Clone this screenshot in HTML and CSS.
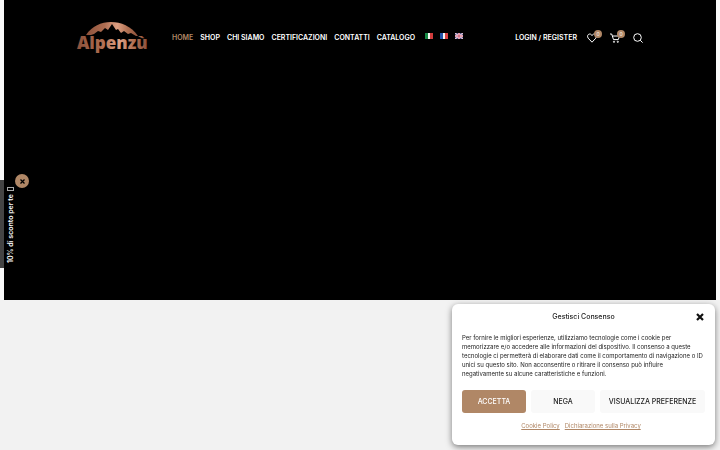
FILE: index.html
```html
<!DOCTYPE html>
<html lang="it">
<head>
    <meta charset="UTF-8">
    <meta name="viewport" content="width=device-width, initial-scale=1.0">
    <title>Alpenzù</title>
    <link rel="stylesheet" href="styles.css">
</head>
<body>
    <div class="hero">
        <header class="header">
            <a href="#" class="logo" aria-label="Alpenzù">
                <svg width="72" height="34" viewBox="0 0 72 34">
                    <defs>
                        <linearGradient id="copper" x1="0" y1="0" x2="1" y2="0">
                            <stop offset="0" stop-color="#8d513b"/>
                            <stop offset="0.35" stop-color="#ad6c50"/>
                            <stop offset="0.6" stop-color="#dda083"/>
                            <stop offset="0.8" stop-color="#b07052"/>
                            <stop offset="1" stop-color="#8d513b"/>
                        </linearGradient>
                    </defs>
                    <path d="M10 14C16 5 25 1 35 1s20 4 27 14z" fill="url(#copper)"/>
                    <path d="M12 15l6-2 4-3 3 1 4-4 3 2 4-6 4 6 2-1 3 4 3-2 4 3 3-1 5 3z" fill="#000"/>
                    <text x="1" y="28" class="logo-text" fill="url(#copper)">Alpenzù</text>
                </svg>
            </a>
            <nav class="nav">
                <a href="#" class="active">HOME</a>
                <a href="#">SHOP</a>
                <a href="#">CHI SIAMO</a>
                <a href="#">CERTIFICAZIONI</a>
                <a href="#">CONTATTI</a>
                <a href="#">CATALOGO</a>
            </nav>
            <div class="flags">
                <a href="#" aria-label="Italiano">
                    <svg width="8" height="6" viewBox="0 0 8 6"><path fill="#f4f4f0" d="M0 0h8v6H0z"/><path fill="#168a45" d="M0 0h3v6H0z"/><path fill="#cf3b3b" d="M5 0h3v6H5z"/></svg>
                </a>
                <a href="#" aria-label="Français">
                    <svg width="8" height="6" viewBox="0 0 8 6"><path fill="#f4f4f4" d="M0 0h8v6H0z"/><path fill="#2455a8" d="M0 0h3v6H0z"/><path fill="#dc4242" d="M5 0h3v6H5z"/></svg>
                </a>
                <a href="#" aria-label="English">
                    <svg width="8" height="6" viewBox="0 0 8 6"><path fill="#4c4c8c" d="M0 0h8v6H0z"/><path d="M0 0l8 6M8 0L0 6" stroke="#e5cdd8" stroke-width="1.2"/><path d="M4 0v6M0 3h8" stroke="#fff" stroke-width="2"/><path d="M4 0v6M0 3h8" stroke="#c74463"/></svg>
                </a>
            </div>
            <div class="tools">
                <a href="#" class="login">LOGIN / REGISTER</a>
                <a href="#" class="tool" aria-label="Wishlist">
                    <svg width="10" height="10" viewBox="0 0 10 10"><path d="M5 9.2L1.2 5.2C-.2 3.5.8 1 2.7 1 3.8 1 4.6 1.7 5 2.5 5.4 1.7 6.2 1 7.3 1c1.9 0 2.9 2.5 1.5 4.2z"/></svg>
                    <span class="count">0</span>
                </a>
                <a href="#" class="tool" aria-label="Carrello">
                    <svg width="10" height="10" viewBox="0 0 10 10"><path d="M0 1h1.7l1.8 5.6h4.8L9.6 3H2.4"/><circle cx="4" cy="8.8" r=".6"/><circle cx="7.8" cy="8.8" r=".6"/></svg>
                    <span class="count">0</span>
                </a>
                <a href="#" class="tool" aria-label="Cerca">
                    <svg width="10" height="10" viewBox="0 0 10 10"><circle cx="4.5" cy="4.5" r="3.8"/><path d="M7.2 7.2l2.4 2.4"/></svg>
                </a>
            </div>
        </header>
    </div>

    <div class="promo">
        <button type="button" class="promo-label">10% di sconto per te <span class="glyph"></span></button>
        <button type="button" class="promo-close" aria-label="Chiudi">
            <svg width="5" height="5" viewBox="0 0 5 5"><path d="M.5.5l4 4M4.5.5l-4 4" stroke="#000" stroke-width="1.3"/></svg>
        </button>
    </div>

    <div class="consent" role="dialog" aria-labelledby="consentTitle">
        <div class="consent-header">
            <h2 id="consentTitle">Gestisci Consenso</h2>
            <button type="button" class="consent-close" aria-label="Chiudi">
                <svg width="8" height="8" viewBox="0 0 8 8"><path d="M1 1l6 6M7 1L1 7" stroke="#111" stroke-width="2.2"/></svg>
            </button>
        </div>
        <p>Per fornire le migliori esperienze, utilizziamo tecnologie come i cookie per memorizzare e/o accedere alle informazioni del dispositivo. Il consenso a queste tecnologie ci permetterà di elaborare dati come il comportamento di navigazione o ID unici su questo sito. Non acconsentire o ritirare il consenso può influire negativamente su alcune caratteristiche e funzioni.</p>
        <div class="consent-buttons">
            <button type="button" class="btn btn-accept">ACCETTA</button>
            <button type="button" class="btn">NEGA</button>
            <button type="button" class="btn">VISUALIZZA PREFERENZE</button>
        </div>
        <div class="consent-links">
            <a href="#">Cookie Policy</a>
            <a href="#">Dichiarazione sulla Privacy</a>
        </div>
    </div>
</body>
</html>
```
FILE: styles.css
```css
:root {
    --primary-color: #b08766;
    --background-color: #f2f2f2;
    --text-color: #222;
}

* {
    margin: 0;
    padding: 0;
    box-sizing: border-box;
}

body {
    font-family: Inter, "Liberation Sans", sans-serif;
    background-color: var(--background-color);
    color: var(--text-color);
    min-height: 100vh;
}

a {
    color: inherit;
    text-decoration: none;
}

button {
    font-family: inherit;
    border: none;
    cursor: pointer;
}

svg {
    display: block;
}

.hero {
    height: 300px;
    border: solid #f9f9f9;
    border-width: 0 4px;
    background-color: #000;
}

.header {
    display: flex;
    align-items: center;
    max-width: 568px;
    height: 75px;
    margin: 0 auto;
    color: #fff;
    font-size: 7px;
    font-weight: 600;
}

.logo-text {
    font-family: "Open Sans", sans-serif;
    font-size: 17px;
    font-weight: 800;
}

.nav {
    display: flex;
    gap: 7px;
    margin-left: 24px;
}

.nav .active {
    color: var(--primary-color);
}

.flags {
    display: flex;
    gap: 7px;
    margin: 0 0 3px 10px;
}

.tools {
    display: flex;
    align-items: center;
    gap: 13px;
    margin-left: auto;
    padding-right: 1px;
}

.login {
    margin-right: -3px;
}

.tool {
    position: relative;
}

.tool svg {
    fill: none;
    stroke: #fff;
    stroke-width: 1;
}

.count {
    position: absolute;
    top: -3px;
    right: -5px;
    width: 8px;
    height: 8px;
    border-radius: 50%;
    background-color: var(--primary-color);
    font-size: 5px;
    font-weight: 400;
    line-height: 8px;
    text-align: center;
}

.promo {
    position: fixed;
    top: 180px;
    left: 0;
}

/* rotated so the label reads bottom to top */
.promo-label {
    display: flex;
    align-items: center;
    gap: 3px;
    height: 88px;
    padding: 5px 2px;
    border-right: 4px solid #444;
    background-color: #000;
    color: #fff;
    font-size: 7px;
    font-weight: 600;
    line-height: 9px;
    writing-mode: vertical-rl;
    transform: rotate(180deg);
}

.glyph {
    width: 7px;
    height: 4px;
    border: 1px solid #aaa;
}

.promo-close {
    position: absolute;
    top: -6px;
    left: 15px;
    display: grid;
    place-items: center;
    width: 14px;
    height: 14px;
    border-radius: 50%;
    background-color: var(--primary-color);
}

.consent {
    position: fixed;
    right: 5px;
    bottom: 5px;
    width: 263px;
    padding: 7px 10px 14px;
    border-radius: 6px;
    background-color: #fff;
    box-shadow: 0 2px 6px rgba(0, 0, 0, 0.5);
}

.consent-header {
    display: grid;
    grid-template-columns: 1fr auto 1fr;
    align-items: center;
}

.consent-header h2 {
    grid-column: 2;
    font-size: 7px;
    font-weight: 500;
    line-height: 12px;
}

.consent-close {
    justify-self: end;
    margin-right: 1px;
    background: none;
}

.consent p {
    margin-top: 10px;
    font-size: 6px;
    line-height: 9px;
}

.consent-buttons {
    display: flex;
    gap: 5px;
    margin-top: 12px;
}

.btn {
    flex: 1 1 64px;
    height: 23px;
    border-radius: 3px;
    background-color: #f9f9f9;
    color: var(--text-color);
    font-size: 7px;
    font-weight: 500;
    white-space: nowrap;
}

.btn:last-child {
    flex: 0 0 105px;
}

.btn-accept {
    background-color: var(--primary-color);
    color: #fff;
}

.consent-links {
    display: flex;
    justify-content: center;
    gap: 5px;
    margin-top: 8px;
    padding-right: 5px;
    color: var(--primary-color);
    font-size: 6px;
    line-height: 10px;
}

.consent-links a {
    text-decoration: underline;
}
```
